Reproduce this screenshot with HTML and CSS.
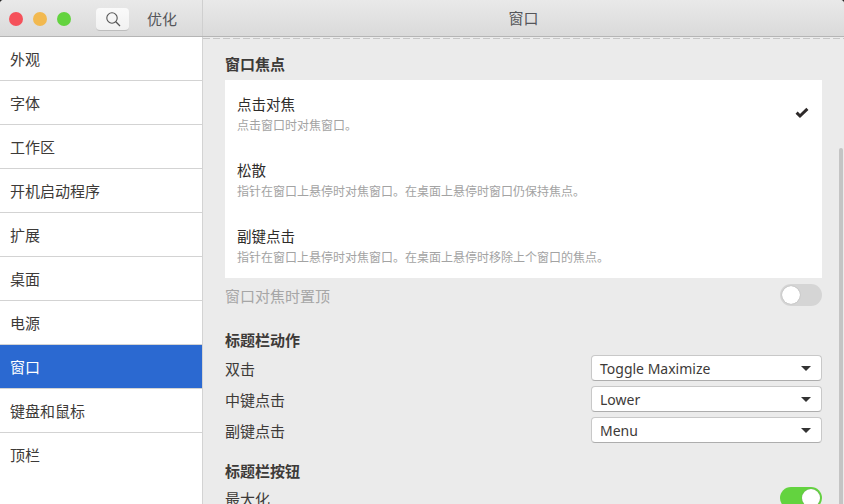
FILE: index.html
```html
<!DOCTYPE html>
<html lang="zh-CN">
<head>
<meta charset="utf-8">
<title>优化</title>
<link rel="stylesheet" href="styles.css">
</head>
<body>
<div class="window">
  <header class="titlebar">
    <div class="title-left">
      <span class="light red"></span><span class="light yellow"></span><span class="light green"></span>
      <button class="search-btn" aria-label="search">
        <svg width="16" height="16" viewBox="0 0 16 16"><circle cx="7" cy="7" r="5.2" fill="none" stroke="#555" stroke-width="1.1"/><path d="M10.8 10.8 15 15" stroke="#555" stroke-width="1.3" fill="none"/></svg>
      </button>
      <span class="app-name">优化</span>
    </div>
    <div class="title-right">窗口</div>
  </header>
  <div class="main">
    <nav class="sidebar">
      <div class="nav-item">外观</div>
      <div class="nav-item">字体</div>
      <div class="nav-item">工作区</div>
      <div class="nav-item">开机启动程序</div>
      <div class="nav-item">扩展</div>
      <div class="nav-item">桌面</div>
      <div class="nav-item">电源</div>
      <div class="nav-item selected">窗口</div>
      <div class="nav-item">键盘和鼠标</div>
      <div class="nav-item last">顶栏</div>
    </nav>
    <main class="content">
      <div class="dash"></div>
      <h2 class="heading first">窗口焦点</h2>
      <div class="focus-list">
        <div class="focus-row">
          <div class="focus-text"><div class="focus-title">点击对焦</div><div class="focus-desc">点击窗口时对焦窗口。</div></div>
          <svg class="check" width="14" height="12" viewBox="0 0 14 12"><path d="M1.6 5.6 5 9 12.4 1.8" fill="none" stroke="#2e2a2a" stroke-width="3"/></svg>
        </div>
        <div class="focus-row">
          <div class="focus-text"><div class="focus-title">松散</div><div class="focus-desc">指针在窗口上悬停时对焦窗口。在桌面上悬停时窗口仍保持焦点。</div></div>
        </div>
        <div class="focus-row">
          <div class="focus-text"><div class="focus-title">副键点击</div><div class="focus-desc">指针在窗口上悬停时对焦窗口。在桌面上悬停时移除上个窗口的焦点。</div></div>
        </div>
      </div>
      <div class="setting raise">
        <span class="muted">窗口对焦时置顶</span>
        <span class="switch off"><span class="knob"></span></span>
      </div>
      <h2 class="heading second">标题栏动作</h2>
      <div class="setting action"><span>双击</span><div class="combo"><span>Toggle Maximize</span><i class="arrow"></i></div></div>
      <div class="setting action"><span>中键点击</span><div class="combo"><span>Lower</span><i class="arrow"></i></div></div>
      <div class="setting action"><span>副键点击</span><div class="combo"><span>Menu</span><i class="arrow"></i></div></div>
      <h2 class="heading third">标题栏按钮</h2>
      <div class="setting maxrow"><span>最大化</span><span class="switch on"><span class="knob"></span></span></div>
      <div class="scrollbar"></div>
    </main>
  </div>
</div>
</body>
</html>
```
FILE: styles.css
```css
* { box-sizing: border-box; }
html, body { margin: 0; height: 100%; overflow: hidden; }
body { font-family: "Noto Sans CJK SC", "Noto Sans", sans-serif; font-size: 15px; color: #3d3a38; background: #262626; }
.window { width: 844px; height: 504px; display: flex; flex-direction: column; overflow: hidden; background: #ebebeb; border-radius: 4px 4px 0 0; }
.titlebar { height: 37px; flex: none; display: flex; background: linear-gradient(#e9e9e9, #dadada); border-bottom: 1px solid #b5b5b5; }
.title-left { width: 203px; flex: none; display: flex; align-items: center; padding-left: 9px; border-right: 1px solid #cfcfcf; }
.light { width: 14px; height: 14px; border-radius: 50%; margin: 2px 10px 0 0; }
.red { background: #f5515a; }
.yellow { background: #f2b950; }
.green { background: #63d33f; margin-right: 0; }
.search-btn { width: 33px; height: 23px; margin: 3px 0 0 25px; padding: 0; display: flex; align-items: center; justify-content: center; background: linear-gradient(#fafafa, #f1f1f1); border: 0; border-bottom: 1px solid #bdbdbd; border-radius: 4px; }
.app-name { margin-left: 18px; color: #55565a; }
.title-right { flex: 1; text-align: center; line-height: 36px; color: #55565a; }
.main { flex: 1; display: flex; min-height: 0; }
.sidebar { width: 203px; flex: none; background: #fff; border-right: 1px solid #d3d3d3; }
.nav-item { height: 44px; line-height: 43px; padding-left: 10px; border-bottom: 1px solid #d3d3d3; color: #3d3a38; }
.nav-item.selected { background: #2b69d1; color: #fff; border-bottom-color: #d3d3d3; }
.nav-item.last { border-bottom: 0; }
.content { flex: 1; position: relative; padding: 0 22px; overflow: hidden; }
.dash { height: 1px; margin: 1px -22px 0; background: repeating-linear-gradient(90deg, #c6c6c6 0 7px, transparent 7px 10px); }
.heading { margin: 0; font-size: 15px; font-weight: 700; line-height: 20px; color: #3d3a38; }
.heading.first { margin-top: 15px; }
.heading.second { margin-top: 18px; }
.heading.third { margin-top: 18px; }
.focus-list { margin-top: 6px; background: #fff; }
.focus-row { height: 66px; display: flex; justify-content: space-between; align-items: center; padding: 0 13px 0 12px; }
.focus-title { font-size: 14.5px; line-height: 20px; color: #2e2c2a; }
.focus-desc { margin-top: 3px; font-size: 12px; line-height: 16px; color: #a3a3a3; }
.setting { display: flex; justify-content: space-between; align-items: center; }
.raise { height: 34px; }
.muted { color: #a6a6a6; }
.action { height: 26px; margin-top: 5px; }
.combo { width: 231px; height: 26px; display: flex; justify-content: space-between; align-items: center; padding: 0 10px 0 8px; background: #fff; border: 1px solid #c8c8c8; border-bottom-color: #adadad; border-radius: 4px; font-family: "Noto Sans", sans-serif; font-size: 14px; color: #3d3a38; }
.arrow { width: 0; height: 0; border-left: 5px solid transparent; border-right: 5px solid transparent; border-top: 5px solid #333; }
.switch { width: 42px; height: 22px; border-radius: 11px; padding: 2px; display: flex; }
.switch.off { background: #d5d5d5; }
.switch.on { background: #63d33f; justify-content: flex-end; }
.knob { width: 18px; height: 18px; border-radius: 50%; background: #fff; box-shadow: 0 0 1px #888; }
.maxrow { margin-top: 6px; height: 22px; }
.scrollbar { position: absolute; right: 1px; top: 111px; bottom: 0; width: 4px; background: #c4c4c4; border-radius: 2px 2px 0 0; }
```
